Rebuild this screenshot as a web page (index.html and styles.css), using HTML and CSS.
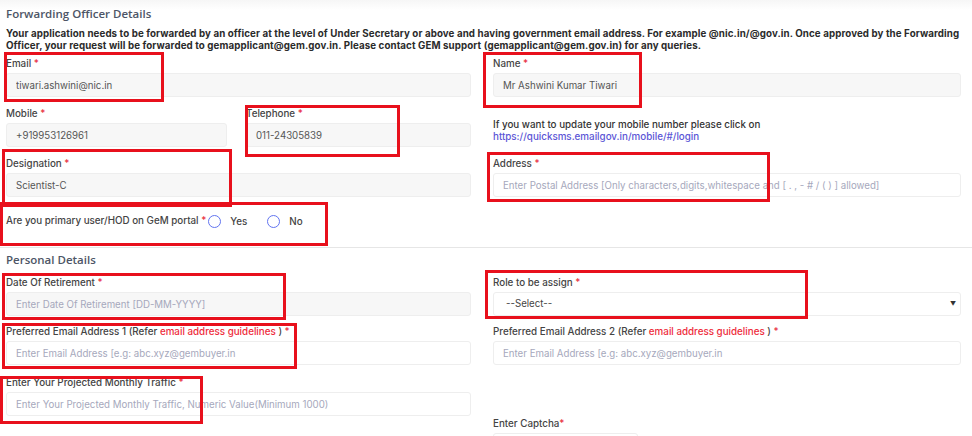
FILE: index.html
```html
<!DOCTYPE html>
<html lang="en">
<head>
<meta charset="utf-8">
<title>Forwarding Officer Details</title>
<link rel="stylesheet" href="styles.css">
</head>
<body>
<div class="page">
  <div class="topband"></div>
  <h2 class="section-title first">Forwarding Officer Details</h2>
  <p class="intro">Your application needs to be forwarded by an officer at the level of Under Secretary or above and having government email address. For example @nic.in/@gov.in. Once approved by the Forwarding<br>Officer, your request will be forwarded to gemapplicant@gem.gov.in. Please contact GEM support (gemapplicant@gem.gov.in) for any queries.</p>

  <div class="row r1">
    <div class="field">
      <label class="lbl">Email <span class="req">*</span></label>
      <input class="inp filled" type="text" value="tiwari.ashwini@nic.in" readonly>
    </div>
    <div class="field">
      <label class="lbl">Name <span class="req">*</span></label>
      <input class="inp filled" type="text" value="Mr Ashwini Kumar Tiwari" readonly>
    </div>
  </div>

  <div class="row r2">
    <div class="split">
      <div class="field">
        <label class="lbl">Mobile <span class="req">*</span></label>
        <input class="inp filled" type="text" value="+919953126961" readonly>
      </div>
      <div class="field">
        <label class="lbl">Telephone <span class="req">*</span></label>
        <input class="inp filled" type="text" value="011-24305839" readonly>
      </div>
    </div>
    <div class="note">If you want to update your mobile number please click on<br><a class="link" href="#">https://quicksms.emailgov.in/mobile/#/login</a></div>
  </div>

  <div class="row r3">
    <div class="field">
      <label class="lbl">Designation <span class="req">*</span></label>
      <input class="inp filled" type="text" value="Scientist-C" readonly>
    </div>
    <div class="field">
      <label class="lbl">Address <span class="req">*</span></label>
      <input class="inp" type="text" placeholder="Enter Postal Address [Only characters,digits,whitespace and [ . , - # / ( ) ] allowed]">
    </div>
  </div>

  <div class="radio-row">
    <span class="lbl inline">Are you primary user/HOD on GeM portal <span class="req">*</span></span>
    <span class="radio"></span><span class="radio-text">Yes</span>
    <span class="radio second"></span><span class="radio-text">No</span>
  </div>

  <hr class="divider">

  <h2 class="section-title">Personal Details</h2>

  <div class="row p1">
    <div class="field">
      <label class="lbl">Date Of Retirement <span class="req">*</span></label>
      <input class="inp filled" type="text" placeholder="Enter Date Of Retirement [DD-MM-YYYY]">
    </div>
    <div class="field">
      <label class="lbl">Role to be assign <span class="req">*</span></label>
      <div class="select">--Select--<span class="caret">&#9660;</span></div>
    </div>
  </div>

  <div class="row p2">
    <div class="field">
      <label class="lbl">Preferred Email Address 1 (Refer <a class="guide" href="#">email address guidelines</a> ) <span class="req">*</span></label>
      <input class="inp" type="text" placeholder="Enter Email Address [e.g: abc.xyz@gembuyer.in">
    </div>
    <div class="field">
      <label class="lbl">Preferred Email Address 2 (Refer <a class="guide" href="#">email address guidelines</a> ) <span class="req">*</span></label>
      <input class="inp" type="text" placeholder="Enter Email Address [e.g: abc.xyz@gembuyer.in">
    </div>
  </div>

  <div class="row p3">
    <div class="field">
      <label class="lbl">Enter Your Projected Monthly Traffic <span class="req">*</span></label>
      <input class="inp" type="text" placeholder="Enter Your Projected Monthly Traffic, Numeric Value(Minimum 1000)">
    </div>
    <div></div>
  </div>

  <div class="row p4">
    <div></div>
    <div class="field">
      <label class="lbl">Enter Captcha<span class="req">*</span></label>
      <input class="inp captcha" type="text">
    </div>
  </div>

  <div class="annot a-email"></div>
  <div class="annot a-name"></div>
  <div class="annot a-tel"></div>
  <div class="annot a-desig"></div>
  <div class="annot a-addr"></div>
  <div class="annot a-radio"></div>
  <div class="annot a-date"></div>
  <div class="annot a-role"></div>
  <div class="annot a-pref"></div>
  <div class="annot a-traffic"></div>
</div>
</body>
</html>
```

FILE: styles.css
```css
* { box-sizing: border-box; }
html, body { margin: 0; padding: 0; background: #fff; }
body {
  font-family: "Inter", "Noto Sans", "DejaVu Sans", sans-serif;
  color: #444;
  width: 972px;
  height: 436px;
  overflow: hidden;
}
.page {
  position: relative;
  padding: 1px 11px 0 6px;
  width: 972px;
  height: 436px;
  overflow: hidden;
}
.topband {
  position: absolute;
  left: 0; top: 0; right: 0; height: 10px;
  background: linear-gradient(#f6f6f6, #fff);
}
.section-title {
  position: relative;
  margin: 4px 0 0 0;
  font-family: "Open Sans", "Noto Sans", sans-serif;
  font-weight: 600;
  font-size: 11.5px;
  line-height: 16px;
  color: #4d5566;
}
.section-title.first { margin-top: 5px; }
.intro {
  margin: 6px 0 5px 0;
  font-size: 9.75px;
  line-height: 12px;
  font-weight: 700;
  color: #2b2b2b;
  letter-spacing: 0.1px;
  white-space: nowrap;
}
.row {
  display: grid;
  grid-template-columns: 465px 468px;
  column-gap: 22px;
  margin-bottom: 10px;
}
.split {
  display: grid;
  grid-template-columns: 221px 225px;
  column-gap: 19px;
}
.field { display: flex; flex-direction: column; }
.lbl {
  display: block;
  font-size: 9.8px;
  line-height: 12px;
  padding-top: 1px;
  font-weight: 500;
  color: #444;
  margin-bottom: 3px;
  white-space: nowrap;
}
.req { color: #e8283a; }
.inp {
  height: 24px;
  width: 100%;
  border: 1px solid #eeeeee;
  border-radius: 3px;
  background: #fff;
  padding: 0 9px;
  font-family: inherit;
  font-size: 9.7px;
  color: #555;
  outline: none;
}
.inp.filled { background: #f7f7f7; }
.inp::placeholder { color: #a6a8bc; }
.inp.captcha { width: 145px; }
.note {
  padding-top: 12px;
  font-size: 9.8px;
  line-height: 12px;
  font-weight: 500;
  color: #333;
}
.link { color: #5b55d6; text-decoration: none; }
.radio-row {
  display: flex;
  align-items: center;
  height: 40px;
  padding-bottom: 12px;
}
.lbl.inline { margin: 0; padding: 0; display: inline-block; }
.radio {
  display: inline-block;
  width: 13px;
  height: 13px;
  border: 1.6px solid #6274f0;
  border-radius: 50%;
  margin-left: 2px;
  margin-right: 9px;
}
.radio.second { margin-left: 20px; margin-right: 9px; }
.radio-text {
  font-size: 9.8px;
  font-weight: 500;
  color: #444;
}
.divider {
  margin: 0 -11px 0 -6px;
  border: 0;
  border-top: 1px solid #e6e6e6;
  height: 0;
}
.section-title + .row { margin-top: 8px; }
.p1 { margin-bottom: 9px; }
.p2 { margin-bottom: 11px; }
.p3 { margin-bottom: 1px; }
.guide { color: #ee2b3b; text-decoration: none; }
.select {
  position: relative;
  height: 24px;
  border: 1px solid #eeeeee;
  border-radius: 3px;
  background: #fff;
  padding: 0 12px;
  font-size: 9.7px;
  line-height: 22px;
  color: #444;
}
.caret {
  position: absolute;
  right: 4px;
  top: 0;
  font-size: 6px;
  color: #333;
}
.annot {
  position: absolute;
  border: 3px solid #e8101c;
  pointer-events: none;
}
.a-email  { left: 4px;   top: 52px;  width: 160px; height: 50px; }
.a-name   { left: 483px; top: 52px;  width: 159px; height: 56px; }
.a-tel    { left: 245px; top: 105px; width: 155px; height: 52px; }
.a-desig  { left: 2px;   top: 149px; width: 230px; height: 58px; }
.a-addr   { left: 487px; top: 152px; width: 283px; height: 50px; }
.a-radio  { left: 0;     top: 202px; width: 328px; height: 44px; }
.a-date   { left: 2px;   top: 273px; width: 284px; height: 47px; }
.a-role   { left: 485px; top: 270px; width: 323px; height: 49px; }
.a-pref   { left: 2px;   top: 323px; width: 295px; height: 46px; }
.a-traffic{ left: 0;     top: 376px; width: 203px; height: 48px; }
```
